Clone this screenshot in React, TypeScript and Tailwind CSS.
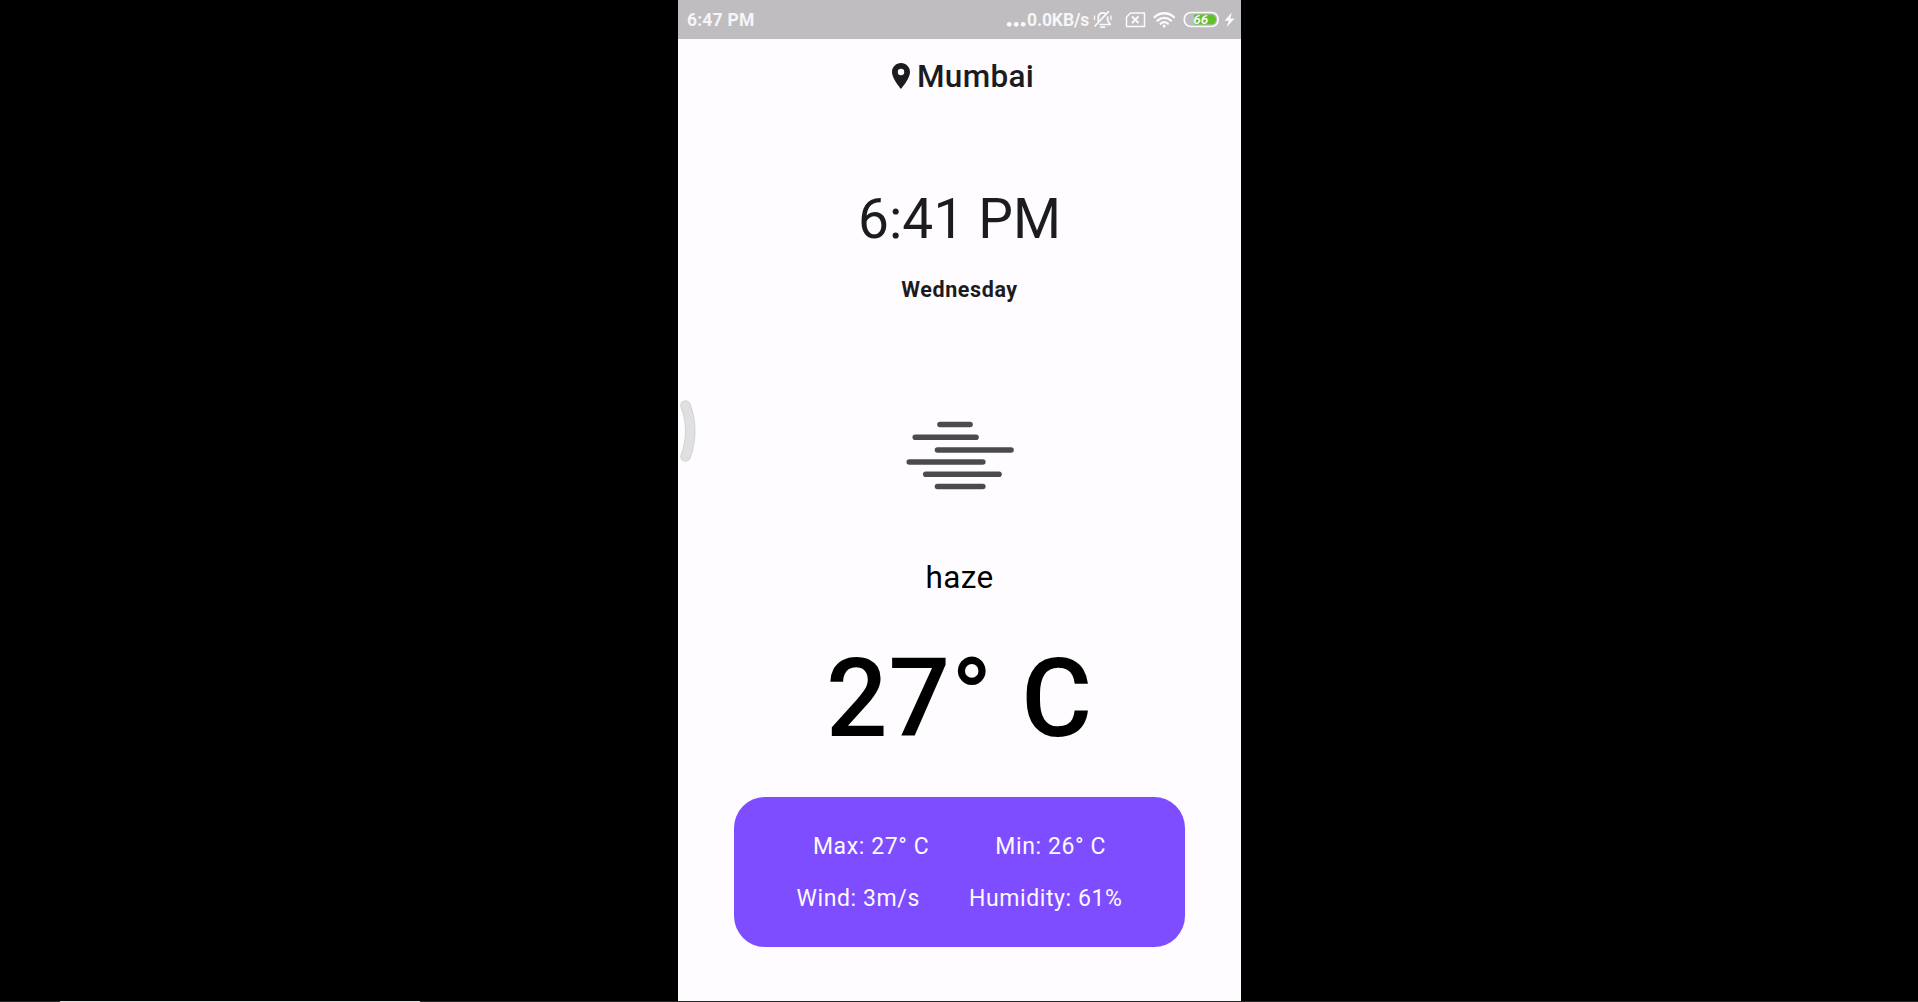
import React from "react";

const hazeLines = [
  { x1: 940, x2: 970, y: 424.5 },
  { x1: 915.3, x2: 976, y: 437.3 },
  { x1: 937.5, x2: 1011, y: 450 },
  { x1: 909.3, x2: 982.8, y: 462 },
  { x1: 925.8, x2: 999, y: 474.3 },
  { x1: 937.5, x2: 982.8, y: 486.5 },
];

function StatusBar() {
  return (
    <header className="flex h-[39px] items-center bg-[#bfbdc0] pl-[9px] text-[17.5px] font-bold text-[#f6f5f7]">
      <span className="pt-[2px] leading-[41px] tracking-[0.2px]">6:47 PM</span>
      <div className="ml-auto flex h-full items-center">
        <svg width="21" height="39" viewBox="0 0 21 39" fill="#fbfafc">
          <circle cx="3.2" cy="24.3" r="2.4" />
          <circle cx="10.2" cy="24.3" r="2.4" />
          <circle cx="17.2" cy="24.3" r="2.4" />
        </svg>
        <span className="w-[63px] whitespace-nowrap pt-[2px] leading-[41px] tracking-[-0.1px]">0.0KB/s</span>
        <svg width="151" height="39" viewBox="1090 0 151 39" fill="none" stroke="#fbfafc" strokeWidth="1.5" strokeLinecap="round" strokeLinejoin="round">
          <path strokeWidth="1.7" d="M1098.300 21.500v-4c0-3 1.900-4.700 4.500-4.700 1.300 0 2.400.4 3.200 1.200M1107.600 17v3.500l2.700 4h-10M1100.800 27.200h3.800M1095 26l13.500-14.300" />
          <path strokeWidth="1.300" d="M1094.500 16v3.500M1111 16v3.500" />
          <path d="M1130.500 13h14v13.500h-18V17z" />
          <path d="M1132.500 17l5.500 5.500m0-5.500l-5.500 5.500" strokeWidth="1.900" />
          <g strokeWidth="2.3">
            <path d="M1154.500 17.200c5.500-5.300 14-5.300 19.500 0M1157.500 20.700c4-3.700 9.500-3.700 13.500 0M1160.700 23.700c2.200-1.900 4.900-1.900 7.100 0" />
          </g>
          <circle cx="1164.200" cy="26" r="1.500" fill="#fbfafc" stroke="none" />
          <rect x="1184.300" y="12.500" width="33.800" height="14" rx="6.500" strokeWidth="1.700" />
          <path d="M1194 14.500h17.500a4.500 4.500 0 0 1 4.500 4.500v1a4.500 4.500 0 0 1-4.500 4.500H1194z" fill="#62bf2c" stroke="none" />
          <text x="1200.800" y="24.300" textAnchor="middle" fill="#fbfafc" stroke="none" fontSize="13.500" fontWeight="600" fontStyle="italic">66</text>
          <path d="M1231.800 12.500l-7.300 8.200h4.200l-2 6.500 7.800-8.700h-4.200z" fill="#fbfafc" stroke="none" />
        </svg>
      </div>
    </header>
  );
}

function HazeIcon() {
  return (
    <svg className="mx-auto mt-[117px] block" width="110" height="70" viewBox="905 420 110 70" stroke="#4b4a4c" strokeWidth="5.600" strokeLinecap="round">
      {hazeLines.map((line) => (
        <line key={line.y} x1={line.x1} x2={line.x2} y1={line.y} y2={line.y} />
      ))}
    </svg>
  );
}

export default function App() {
  return (
    <div className="flex h-[1002px] flex-col overflow-hidden bg-black font-['Roboto',sans-serif]">
      <main className="relative ml-[678px] h-[1001px] w-[563px] bg-[#fefcff] text-[#1c1b1e]">
        <StatusBar />
        <div className="mt-[17px] flex h-10 items-center pl-[214px]">
          <svg width="18" height="26" viewBox="5 2 14 20" preserveAspectRatio="none" fill="#1c1b1e">
            <path d="M12 2C8.130 2 5 5.130 5 9c0 5.250 7 13 7 13s7-7.750 7-13c0-3.870-3.130-7-7-7zm0 9.500a2.500 2.500 0 0 1 0-5 2.500 2.500 0 0 1 0 5z" />
          </svg>
          <h1 className="ml-[7px] pt-[2px] text-[31.500px] font-[460] leading-10 tracking-[0.300px]">Mumbai</h1>
        </div>
        <p className="mt-[91px] text-center text-[55px] leading-[64px] tracking-[0.100px]">6:41 PM</p>
        <p className="mt-[26px] text-center text-[21.500px] font-bold leading-[26px] tracking-[0.600px]">Wednesday</p>
        <HazeIcon />
        <p className="mt-[69px] text-center text-[31.500px] leading-[38px] tracking-[0.400px] text-black">haze</p>
        <p className="mt-[39px] text-center text-[108.500px] font-medium leading-[126px] tracking-[0.900px] text-black">27° C</p>
        <section className="mx-auto mt-[35px] flex h-[150px] w-[451px] flex-col gap-[24px] rounded-[31px] bg-[#7e4dff] pt-[36px] text-[23px] leading-7 tracking-[0.600px] text-[#fcf9ff]">
          <div className="flex justify-center gap-[66px]">
            <span>Max: 27° C</span>
            <span>Min: 26° C</span>
          </div>
          <div className="flex justify-center gap-[49px]">
            <span>Wind: 3m/s</span>
            <span>Humidity: 61%</span>
          </div>
        </section>
        <svg className="absolute left-0 top-[398px]" width="20" height="66" viewBox="0 0 20 66" fill="none" strokeLinecap="round">
          <path d="M7.500 7.500C13.800 23 13.800 43 7.500 58.500" stroke="#d3d2d4" strokeWidth="10.500" />
          <path d="M7.500 7.500C13.800 23 13.800 43 7.500 58.500" stroke="#e0dfe1" strokeWidth="8.500" />
        </svg>
      </main>
      <div className="h-px bg-[#252525] pl-[60px]">
        <div className="h-px w-[360px] bg-[#e0e0e0]" />
      </div>
    </div>
  );
}
